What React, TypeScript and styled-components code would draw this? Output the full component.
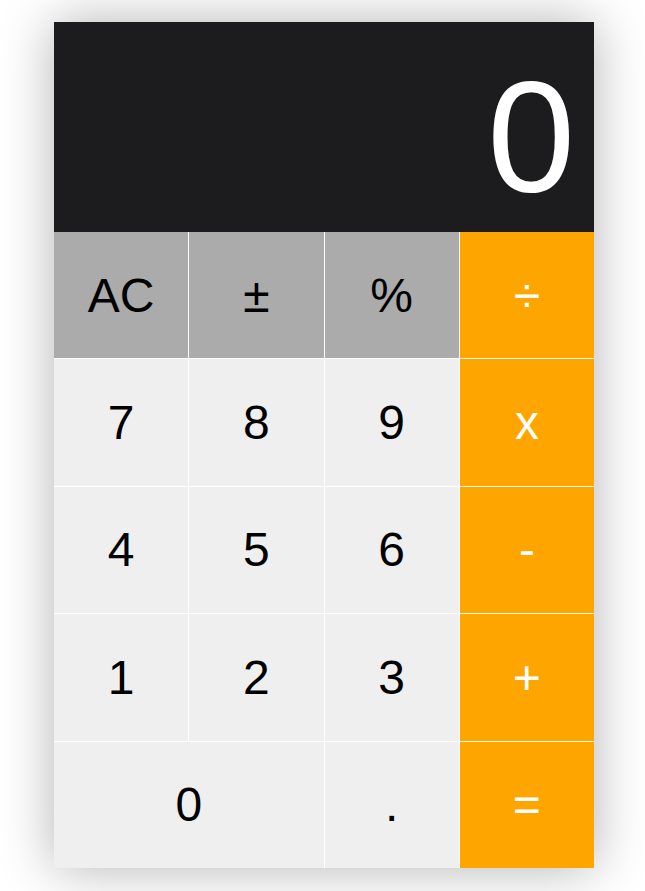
import React from "react";
import styled, { createGlobalStyle } from "styled-components";

const Global = createGlobalStyle`
  html, body { margin: 0; padding: 0; background: #ffffff; }
  body { font-family: "Liberation Sans", Arial, sans-serif; }
`;

const Page = styled.div`
  padding: 22px 0 23px 54px;
`;

const Calculator = styled.div`
  width: 540px;
  box-shadow: 0 0 50px rgba(0, 0, 0, 0.3);
  background: #ffffff;
`;

const Display = styled.div`
  height: 210px;
  box-sizing: border-box;
  background: #1c1b1e;
  color: #ffffff;
  display: flex;
  align-items: flex-end;
  justify-content: flex-end;
  padding: 0 19px 5px 0;
  font-size: 158px;
  line-height: normal;
`;

const Keys = styled.div`
  display: grid;
  grid-template-columns: repeat(4, 1fr);
  grid-template-rows: repeat(5, 1fr);
  gap: 1px;
  height: 636px;
  background: #ffffff;
`;

type Kind = "fn" | "num" | "op";

const colors: Record<Kind, { bg: string; fg: string }> = {
  fn: { bg: "#ababab", fg: "#000000" },
  num: { bg: "#efefef", fg: "#000000" },
  op: { bg: "#ffa500", fg: "#ffffff" },
};

const Key = styled.button<{ $kind: Kind; $wide?: boolean }>`
  border: none;
  margin: 0;
  padding: 0;
  background: ${(p) => colors[p.$kind].bg};
  color: ${(p) => colors[p.$kind].fg};
  font-family: "Liberation Sans", Arial, sans-serif;
  font-size: 48px;
  display: flex;
  align-items: center;
  justify-content: center;
  grid-column: ${(p) => (p.$wide ? "span 2" : "span 1")};
  cursor: pointer;
`;

const keys: { label: string; kind: Kind; wide?: boolean }[] = [
  { label: "AC", kind: "fn" },
  { label: "±", kind: "fn" },
  { label: "%", kind: "fn" },
  { label: "÷", kind: "op" },
  { label: "7", kind: "num" },
  { label: "8", kind: "num" },
  { label: "9", kind: "num" },
  { label: "x", kind: "op" },
  { label: "4", kind: "num" },
  { label: "5", kind: "num" },
  { label: "6", kind: "num" },
  { label: "-", kind: "op" },
  { label: "1", kind: "num" },
  { label: "2", kind: "num" },
  { label: "3", kind: "num" },
  { label: "+", kind: "op" },
  { label: "0", kind: "num", wide: true },
  { label: ".", kind: "num" },
  { label: "=", kind: "op" },
];

export default function App() {
  return (
    <>
      <Global />
      <Page>
        <Calculator>
          <Display>0</Display>
          <Keys>
            {keys.map((k) => (
              <Key key={k.label} $kind={k.kind} $wide={k.wide}>
                {k.label}
              </Key>
            ))}
          </Keys>
        </Calculator>
      </Page>
    </>
  );
}
